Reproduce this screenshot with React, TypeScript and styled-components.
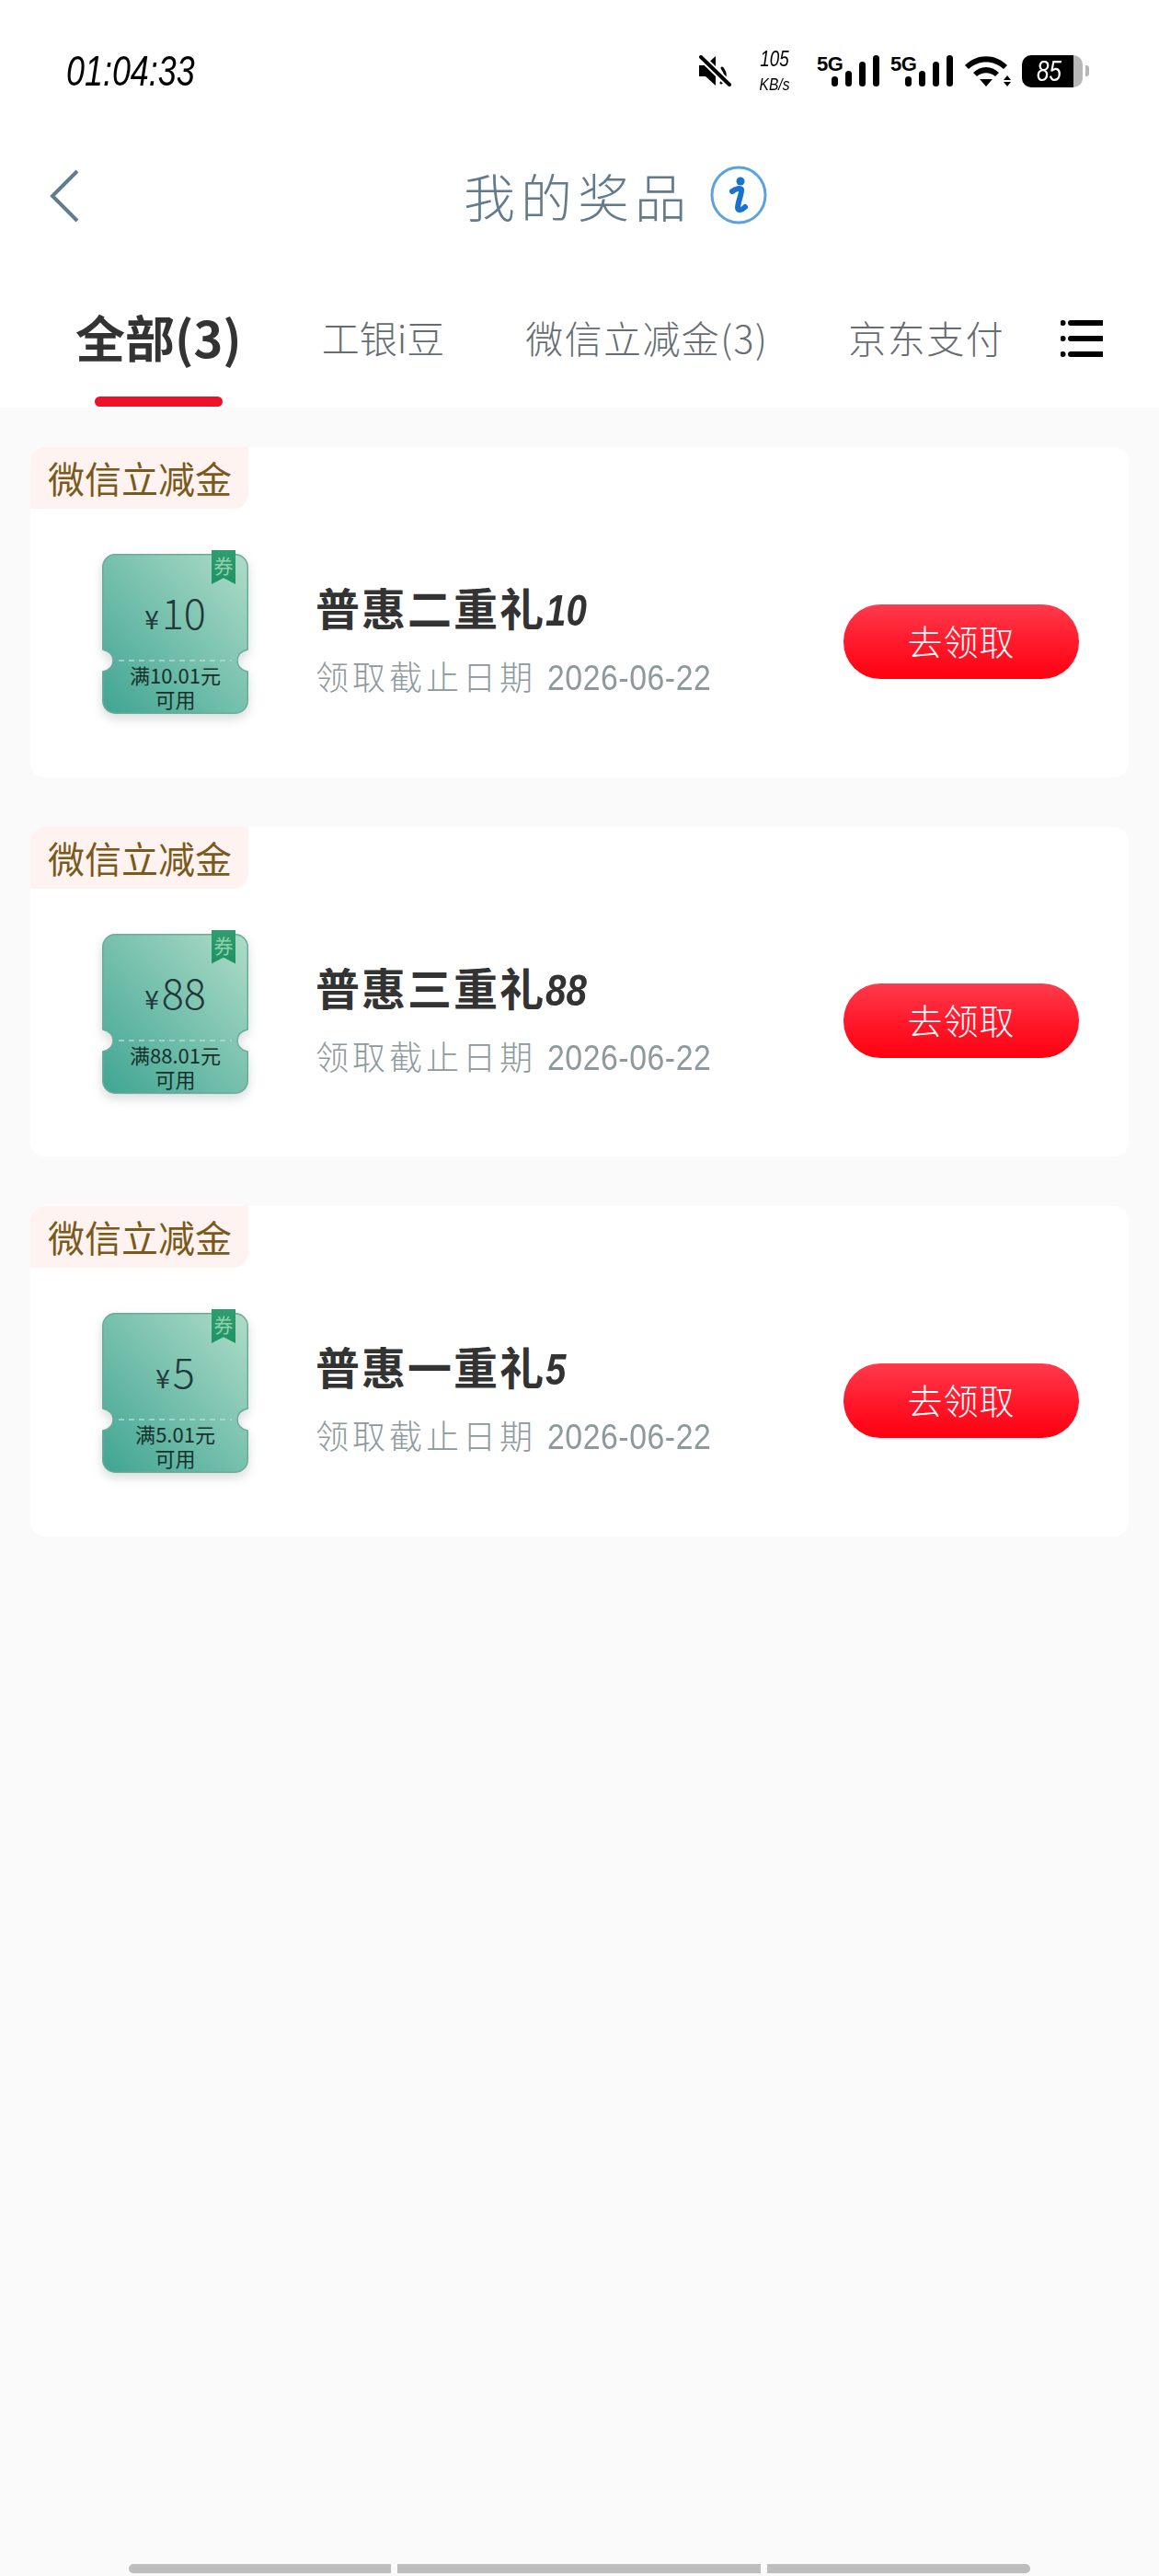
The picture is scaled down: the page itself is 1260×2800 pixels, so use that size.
import styled, { createGlobalStyle } from "styled-components";

const GlobalStyle = createGlobalStyle`
	html, body {
		margin: 0;
		padding: 0;
		background: #fafafa;
	}
	* {
		box-sizing: border-box;
	}
`;

const CJK = `"Noto Sans CJK SC", "Noto Sans", sans-serif`;
const LATIN = `"Liberation Sans", "Noto Sans CJK SC", sans-serif`;

const Page = styled.div`
	width: 1260px;
	height: 2800px;
	display: flex;
	flex-direction: column;
	overflow: hidden;
	background: #fafafa;
	font-family: ${CJK};
`;

const Top = styled.header`
	background: #fff;
`;

const StatusBar = styled.div`
	height: 154px;
	display: flex;
	align-items: center;
	padding: 0 76px 0 72px;
	color: #000;
`;

const Clock = styled.span`
	font-family: ${LATIN};
	font-style: italic;
	font-size: 46px;
	line-height: 1;
	transform: scaleX(0.78);
	transform-origin: left center;
`;

const StatusIcons = styled.div`
	margin-left: auto;
	display: flex;
	align-items: center;
`;

const NetSpeed = styled.div`
	width: 36px;
	height: 48px;
	margin: 0 28px;
	display: flex;
	flex-direction: column;
	align-items: center;
	justify-content: space-between;
	font-family: ${LATIN};
	font-style: italic;
	line-height: 1;
	transform: scaleX(0.82);
`;

const SpeedValue = styled.span`
	font-size: 23px;
`;

const SpeedUnit = styled.span`
	font-size: 19px;
`;

const Signal = styled.div`
	position: relative;
	width: 68px;
	height: 34px;
	margin-right: 12px;
`;

const SignalLabel = styled.span`
	position: absolute;
	left: 0;
	top: -1px;
	font-family: "Liberation Sans", sans-serif;
	font-weight: 700;
	font-size: 22px;
	line-height: 1;
	letter-spacing: -0.5px;
`;

const SignalBars = styled.div`
	display: flex;
	align-items: flex-end;
	justify-content: flex-end;
	gap: 8px;
	height: 100%;
`;

const Bar = styled.i<{ $h: number }>`
	display: block;
	width: 7px;
	height: ${(p) => p.$h}px;
	border-radius: 4px;
	background: #000;
`;

const Battery = styled.div`
	display: flex;
	align-items: center;
	margin-left: 11px;
`;

const BatteryBody = styled.div`
	width: 66px;
	height: 35px;
	padding-left: 16px;
	border-radius: 10px;
	background: linear-gradient(90deg, #000 85%, #b7b7b7 85%);
	color: #fff;
	font-family: ${LATIN};
	font-style: italic;
	font-size: 31px;
	line-height: 35px;
`;

const BatteryValue = styled.span`
	display: inline-block;
	transform: scaleX(0.78);
	transform-origin: left center;
`;

const BatteryCap = styled.i`
	display: block;
	width: 4px;
	height: 12px;
	margin-left: 3px;
	border-radius: 0 3px 3px 0;
	background: #b7b7b7;
`;

const NavBar = styled.div`
	position: relative;
	height: 118px;
	display: flex;
	align-items: center;
	justify-content: center;
`;

const Back = styled.svg`
	position: absolute;
	left: 52px;
	top: 30px;
`;

const Title = styled.h1`
	margin: -2px 0 0 78px;
	display: flex;
	align-items: center;
	gap: 20px;
	font-weight: 300;
	font-size: 56px;
	line-height: 1;
	letter-spacing: 6px;
	color: #627a8c;
`;

const Tabs = styled.nav`
	height: 171px;
	padding: 66px 0 0 82px;
	display: flex;
	align-items: flex-start;
`;

const Tab = styled.div<{ $gap: number }>`
	display: flex;
	flex-direction: column;
	align-items: center;
	margin-right: ${(p) => p.$gap}px;
`;

const TabLabel = styled.span<{ $active?: boolean; $spacing?: number }>`
	height: 56px;
	line-height: 56px;
	white-space: nowrap;
	font-size: ${(p) => (p.$active ? 54 : 41)}px;
	font-weight: ${(p) => (p.$active ? 700 : 300)};
	letter-spacing: ${(p) => p.$spacing ?? 0}px;
	color: ${(p) => (p.$active ? "#333" : "#666d72")};
`;

const Underline = styled.i`
	display: block;
	width: 139px;
	height: 11px;
	margin-top: 37px;
	border-radius: 6px;
	background: #ee1129;
`;

const MenuIcon = styled.svg`
	margin-top: 9px;
`;

const List = styled.main`
	padding: 43px 33px 0;
	display: flex;
	flex-direction: column;
	gap: 54px;
`;

const Card = styled.section`
	height: 358.5px;
	display: flex;
	flex-direction: column;
	border-radius: 16px;
	background: #fff;
`;

const Tag = styled.div`
	width: 237px;
	height: 67px;
	padding-left: 19px;
	border-radius: 16px 0 16px 0;
	background: #fff3f1;
	color: #7a5a1c;
	font-size: 40px;
	line-height: 66px;
`;

const CardRow = styled.div`
	height: 288px;
	padding: 0 54px 0 78px;
	display: flex;
	align-items: center;
`;

const Ticket = styled.div`
	position: relative;
	flex: none;
	align-self: flex-start;
	width: 159px;
	height: 174px;
	margin-top: 49px;
	display: flex;
	flex-direction: column;
	align-items: center;
`;

const TicketShape = styled.svg`
	position: absolute;
	inset: 0;
	overflow: visible;
	filter: drop-shadow(0 5px 6px rgba(60, 90, 80, 0.22));
`;

const Ribbon = styled.div`
	position: absolute;
	top: -4px;
	left: 119px;
	width: 26px;
	height: 37px;
	clip-path: polygon(0 0, 100% 0, 100% 100%, 50% 82%, 0 100%);
	background: linear-gradient(180deg, #2f9d70, #1f9264);
	color: #8fd0ac;
	font-size: 21px;
	line-height: 32px;
	text-align: center;
`;

const Price = styled.div`
	position: relative;
	height: 116px;
	padding-top: 40px;
	display: flex;
	align-items: baseline;
	justify-content: center;
	color: #22383a;
	font-weight: 300;
	line-height: 1;
`;

const Yen = styled.span`
	margin-right: 3px;
	font-size: 28px;
	font-weight: 400;
`;

const Amount = styled.span`
	font-size: 45px;
`;

const Limit = styled.div`
	position: relative;
	margin-top: 2px;
	font-size: 22px;
	line-height: 26px;
	color: #17302b;
	text-align: center;
	white-space: nowrap;
`;

const Info = styled.div`
	flex: 1;
	margin: -5px 0 0 73px;
	display: flex;
	flex-direction: column;
	gap: 21px;
`;

const Name = styled.div`
	font-size: 48px;
	font-weight: 700;
	line-height: 56px;
	letter-spacing: 2px;
	color: #333;
`;

const NameNumber = styled.span`
	display: inline-block;
	font-family: ${LATIN};
	font-style: italic;
	font-weight: 700;
	letter-spacing: 0;
	transform: scaleX(0.84);
	transform-origin: left center;
`;

const Deadline = styled.div`
	font-size: 36px;
	font-weight: 300;
	line-height: 42px;
	letter-spacing: 4px;
	white-space: nowrap;
	color: #8d999d;
`;

const DeadlineDate = styled.span`
	display: inline-block;
	margin-left: 12px;
	font-family: ${LATIN};
	font-size: 38px;
	letter-spacing: 0.6px;
	transform: scaleX(0.89);
	transform-origin: left center;
`;

const ClaimButton = styled.button`
	flex: none;
	width: 256px;
	height: 81px;
	padding: 0 0 4px;
	border: 0;
	border-radius: 40px;
	background: linear-gradient(180deg, #ff3b4c 0%, #ff1a2c 50%, #ff0010 100%);
	color: #fff;
	font-family: ${CJK};
	font-weight: 300;
	font-size: 38px;
	letter-spacing: 1px;
`;

const ScrollBar = styled.div`
	margin-top: auto;
	padding: 0 0 3px 140px;
	display: flex;
	gap: 7px;
`;

const ScrollPart = styled.i<{ $w: number; $radius: string }>`
	display: block;
	width: ${(p) => p.$w}px;
	height: 10px;
	border-radius: ${(p) => p.$radius};
	background: #bdbdbd;
`;

const MuteIcon = () => (
	<svg width="36" height="34" viewBox="0 0 36 34">
		<path d="M0 11h7L18 1v32L7 23H0z" fill="#000" />
		<path d="M25 14c5 6 4 12-1 16" fill="none" stroke="#000" strokeWidth="3" strokeLinecap="round" />
		<path d="M2 2l31 30" stroke="#fff" strokeWidth="8" />
		<path d="M2 2l31 30" stroke="#000" strokeWidth="4" strokeLinecap="round" />
	</svg>
);

const WifiIcon = () => (
	<svg width="52" height="34" viewBox="0 0 52 34">
		<path d="M1 11c13-13 33-13 46 0l-4 4C32 5 16 5 5 15z" fill="#000" />
		<path d="M10 19c8-8 20-8 28 0l-4 4c-6-5-14-5-20 0z" fill="#000" />
		<path d="M17 26h14l-7 8z" fill="#000" />
		<path d="M47 22l4 5h-8zM47 34l4-5h-8z" fill="#000" />
	</svg>
);

const SignalIcon = () => (
	<Signal>
		<SignalLabel>5G</SignalLabel>
		<SignalBars>
			<Bar $h={11} />
			<Bar $h={17} />
			<Bar $h={27} />
			<Bar $h={34} />
		</SignalBars>
	</Signal>
);

const InfoIcon = () => (
	<svg width="62" height="64" viewBox="0 0 62 64">
		<ellipse cx="31" cy="32" rx="29" ry="30" fill="#fff" stroke="#5ba3de" strokeWidth="3" />
		<circle cx="33" cy="17" r="4.5" fill="#1873cc" />
		<path d="M24 28c4-3 9-4 10-2 1 3-4 14-4 20 0 3 4 3 8-1" fill="none" stroke="#1873cc" strokeWidth="6" strokeLinecap="round" />
	</svg>
);

const CouponTicket = ({ amount }: { amount: number }) => (
	<Ticket>
		<TicketShape width="159" height="174" viewBox="0 0 159 174">
			<defs>
				<linearGradient id="ticketFill" x1="1" y1="0" x2="0" y2="1">
					<stop offset="0" stopColor="#aedcc8" />
					<stop offset="1" stopColor="#3fa592" />
				</linearGradient>
			</defs>
			<path
				d="M14 .75H145A13.5 13.5 0 0 1 158.25 14V104C150 106 147 111 147 116S150 126 158.25 128V160A13.5 13.5 0 0 1 145 173.25H14A13.5 13.5 0 0 1 .75 160V128C9 126 12 121 12 116S9 106 .75 104V14A13.5 13.5 0 0 1 14 .75Z"
				fill="url(#ticketFill)"
				stroke="#6fa99a"
				strokeWidth="1.5"
			/>
			<path d="M18 116H141" stroke="#b6e0d2" strokeWidth="2" strokeDasharray="6 5" opacity="0.7" />
		</TicketShape>
		<Ribbon>券</Ribbon>
		<Price>
			<Yen>¥</Yen>
			<Amount>{amount}</Amount>
		</Price>
		<Limit>
			满{amount}.01元
			<br />
			可用
		</Limit>
	</Ticket>
);

const prizes = [
	{ name: "普惠二重礼", amount: 10 },
	{ name: "普惠三重礼", amount: 88 },
	{ name: "普惠一重礼", amount: 5 },
];

export default function App() {
	return (
		<Page>
			<GlobalStyle />
			<Top>
				<StatusBar>
					<Clock>01:04:33</Clock>
					<StatusIcons>
						<MuteIcon />
						<NetSpeed>
							<SpeedValue>105</SpeedValue>
							<SpeedUnit>KB/s</SpeedUnit>
						</NetSpeed>
						<SignalIcon />
						<SignalIcon />
						<WifiIcon />
						<Battery>
							<BatteryBody>
								<BatteryValue>85</BatteryValue>
							</BatteryBody>
							<BatteryCap />
						</Battery>
					</StatusIcons>
				</StatusBar>
				<NavBar>
					<Back width="36" height="58" viewBox="0 0 36 58">
						<path d="M32 2L5 29l27 27" fill="none" stroke="#5f7d8e" strokeWidth="4" />
					</Back>
					<Title>
						我的奖品
						<InfoIcon />
					</Title>
				</NavBar>
				<Tabs>
					<Tab $gap={87}>
						<TabLabel $active>全部(3)</TabLabel>
						<Underline />
					</Tab>
					<Tab $gap={88}>
						<TabLabel>工银i豆</TabLabel>
					</Tab>
					<Tab $gap={87}>
						<TabLabel $spacing={1.4}>微信立减金(3)</TabLabel>
					</Tab>
					<Tab $gap={61}>
						<TabLabel $spacing={1.5}>京东支付</TabLabel>
					</Tab>
					<MenuIcon width="46" height="42" viewBox="0 0 46 42">
						<path d="M11 4h35M11 21h35M11 38h35" stroke="#000" strokeWidth="6" strokeLinecap="round" />
						<path d="M2.5 4h.1M2.5 21h.1M2.5 38h.1" stroke="#000" strokeWidth="6" strokeLinecap="round" />
					</MenuIcon>
				</Tabs>
			</Top>
			<List>
				{prizes.map((prize) => (
					<Card key={prize.name}>
						<Tag>微信立减金</Tag>
						<CardRow>
							<CouponTicket amount={prize.amount} />
							<Info>
								<Name>
									{prize.name}
									<NameNumber>{prize.amount}</NameNumber>
								</Name>
								<Deadline>
									领取截止日期
									<DeadlineDate>2026-06-22</DeadlineDate>
								</Deadline>
							</Info>
							<ClaimButton>去领取</ClaimButton>
						</CardRow>
					</Card>
				))}
			</List>
			<ScrollBar>
				<ScrollPart $w={285} $radius="5px 0 0 5px" />
				<ScrollPart $w={395} $radius="0" />
				<ScrollPart $w={286} $radius="0 5px 5px 0" />
			</ScrollBar>
		</Page>
	);
}
